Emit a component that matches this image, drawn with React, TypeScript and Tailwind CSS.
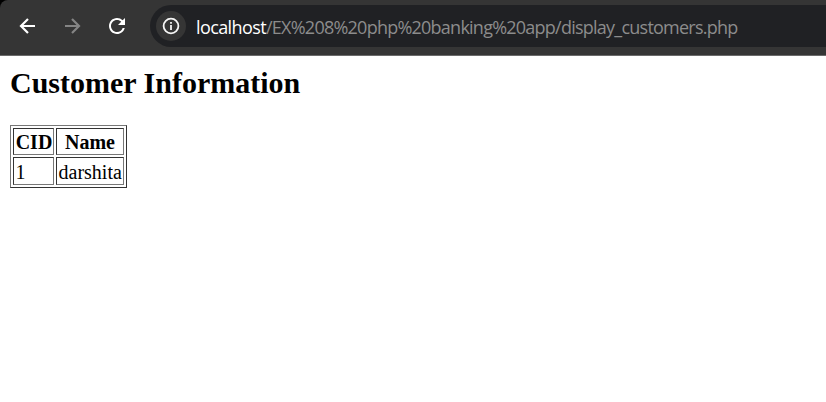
const customers = [{ cid: 1, name: "darshita" }];

function BrowserBar() {
  return (
    <div className="bg-black">
      <header className="flex h-14 items-start rounded-tl-lg border-b border-[#6a6a6a] bg-[#353535] pt-[5px]">
        <nav className="flex h-[42px] w-[150px] shrink-0 items-center pl-[16px]">
          <svg className="size-6" viewBox="0 0 24 24" fill="none" stroke="#ffffff" strokeWidth="2.2">
            <path d="M19 12H5.5M12 5l-7 7 7 7" />
          </svg>
          <svg className="ml-[20px] size-6" viewBox="0 0 24 24" fill="none" stroke="#858585" strokeWidth="2.2">
            <path d="M5 12h13.5M12 5l7 7-7 7" />
          </svg>
          <svg className="ml-[21px] size-6" viewBox="0 0 24 24" fill="#ffffff">
            <path d="M17.65 6.35A7.958 7.958 0 0 0 12 4c-4.42 0-7.99 3.58-7.99 8s3.57 8 7.99 8c3.73 0 6.84-2.55 7.73-6h-2.08A5.99 5.99 0 0 1 12 18c-3.31 0-6-2.69-6-6s2.69-6 6-6c1.66 0 3.14.69 4.22 1.78L13 11h7V4l-2.35 2.35z" />
          </svg>
        </nav>
        <div className="flex h-[42px] grow items-center rounded-l-full bg-[#202124] pl-[6px]">
          <span className="flex size-[30px] shrink-0 items-center justify-center rounded-full bg-[#353535]">
            <svg className="size-5" viewBox="0 0 20 20" fill="none" stroke="#f5f5f5" strokeWidth="1.8">
              <circle cx="10" cy="10" r="7.4" />
              <path d="M10 9v5M10 6v1.8" />
            </svg>
          </span>
          <span className="ml-[10px] whitespace-nowrap pt-px font-['Open_Sans','Noto_Sans',sans-serif] text-[18px] leading-6 tracking-[-0.76px] text-[#8c8c8c]">
            <span className="tracking-[-0.6px] text-white">localhost</span>/EX%208%20php%20banking%20app/display_customers.php
          </span>
        </div>
      </header>
    </div>
  );
}

const cell =
  "border border-t-[#333] border-r-[#777] border-b-[#777] border-l-[#333] pt-px pr-0 pb-0 leading-[24px]";

export default function App() {
  return (
    <div className="min-h-screen bg-white font-['Liberation_Serif',serif] text-black">
      <BrowserBar />
      <main className="px-[10px] pt-[10px]">
        <h2 className="text-[30px] leading-[34px] font-bold">Customer Information</h2>
        <table className="mt-[25px] h-[63px] w-[117px] table-fixed border-separate border-spacing-[2px] border border-t-[#777] border-r-[#333] border-b-[#333] border-l-[#777] text-[20px]">
          <colgroup>
            <col className="w-[41px]" />
            <col className="w-[68px]" />
          </colgroup>
          <thead>
            <tr className="h-[27px]">
              <th className={`${cell} pl-px`}>CID</th>
              <th className={`${cell} pl-0`}>Name</th>
            </tr>
          </thead>
          <tbody>
            {customers.map((c) => (
              <tr key={c.cid} className="h-[28px]">
                <td className={`${cell} pl-[1.5px]`}>{c.cid}</td>
                <td className={`${cell} pl-[1.5px]`}>{c.name}</td>
              </tr>
            ))}
          </tbody>
        </table>
      </main>
    </div>
  );
}
